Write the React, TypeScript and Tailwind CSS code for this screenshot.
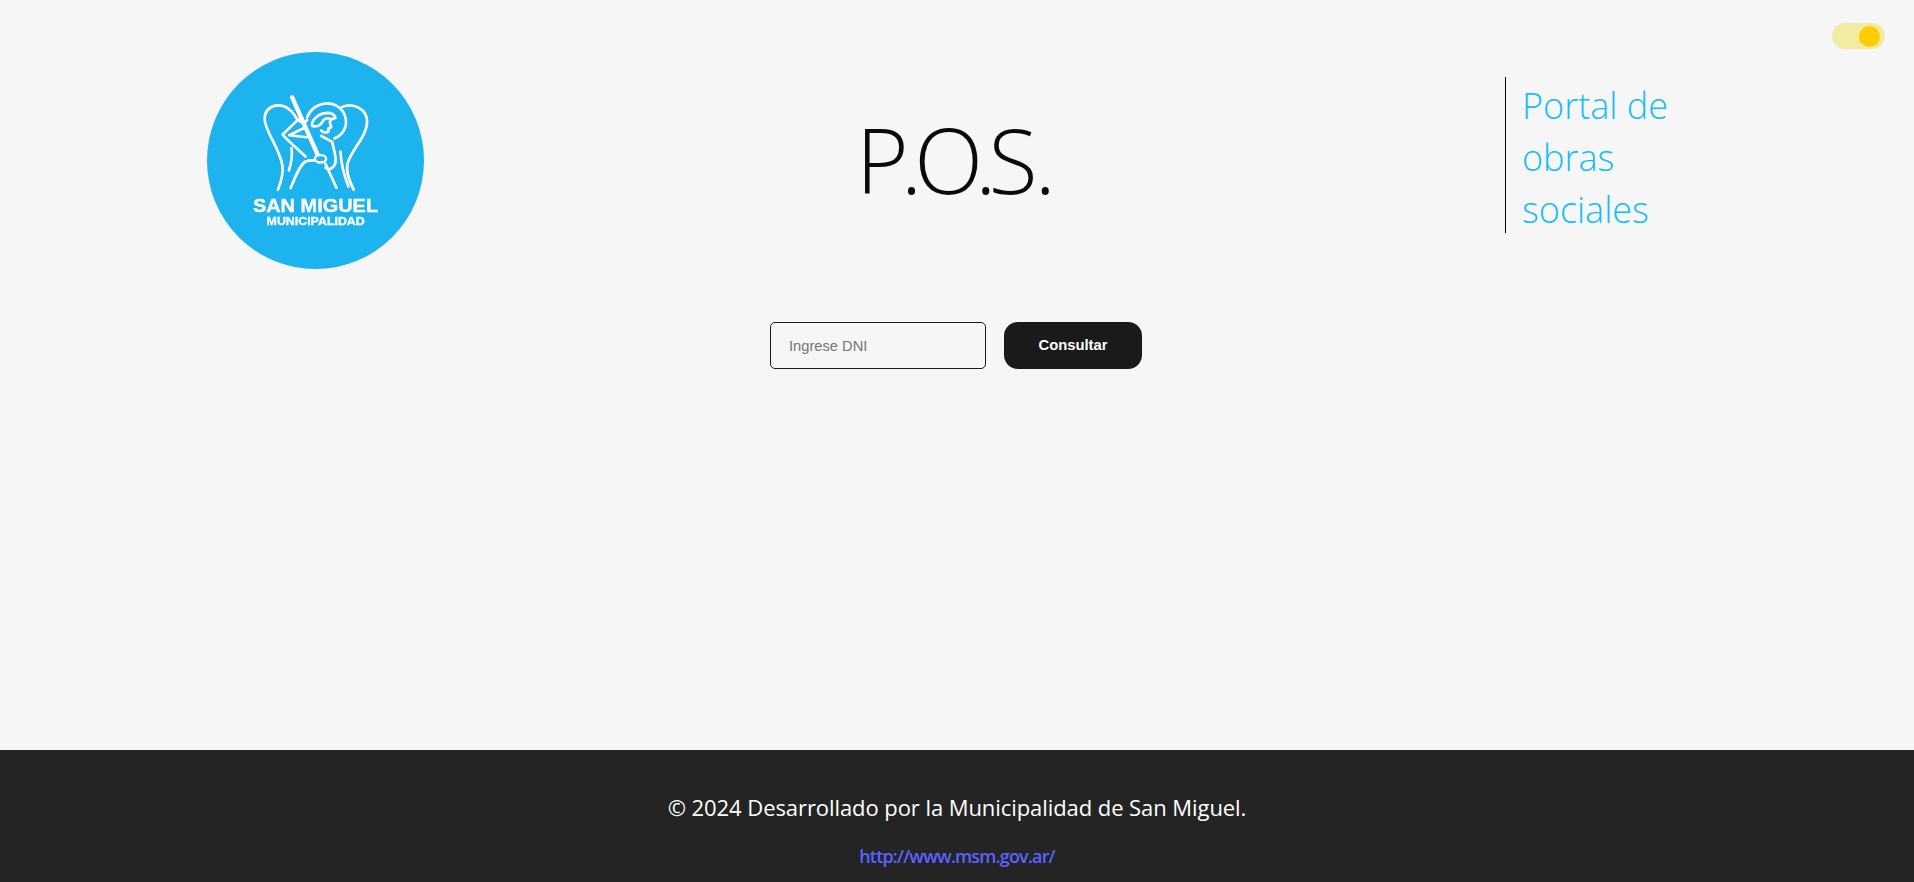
function Logo() {
  return (
    <svg viewBox="49 36 652 652" className="w-[217px] h-[217px] block blur-[0.4px]">
      <circle cx="375" cy="362" r="326" fill="#1cb3ee" />
      <g fill="none" stroke="#fff" strokeWidth="8" strokeLinecap="round" strokeLinejoin="round">
        {/* wings */}
        <path d="M318 235C308 218 296 205 280 199C250 190 222 205 222 238C225 278 265 320 275 375C280 400 270 430 262 450" />
        <path d="M303 325C306 350 302 372 295 392" />
        <path d="M300 445C315 410 328 375 345 365C355 361 365 361 373 362" />
        <path d="M455 201C490 187 530 208 530 245C530 290 482 330 471 372C465 400 480 430 490 450" />
        <path d="M450 335C452 375 462 410 474 440" />
        {/* halo + head */}
        <path d="M350 232C362 200 395 185 425 192C455 200 470 228 466 255C462 275 450 288 432 296" />
        <path d="M365 258C362 240 385 220 410 219C422 219 432 224 435 234C425 236 420 238 418 246L422 262L414 266L414 274C408 280 398 278 392 272" />
        <path d="M365 258C380 262 392 254 398 242C402 236 410 234 418 236" />
        {/* arms + body */}
        <path d="M322 240L276 284C290 302 320 325 345 350" />
        <path d="M345 262L296 286L348 292" />
        <path d="M392 288L425 306C432 335 440 360 434 372C426 390 415 390 405 384" />
        <path d="M405 372L438 444" />
        <path d="M322 238C330 250 345 250 350 240" />
      </g>
      <path d="M305 172L383 348" stroke="#fff" strokeWidth="13" strokeLinecap="round" />
      <ellipse cx="390" cy="357" rx="17" ry="11" fill="#1cb3ee" stroke="#fff" strokeWidth="7" />
      <text x="187" y="518" textLength="376" lengthAdjust="spacingAndGlyphs" fill="#fff" stroke="#fff" strokeWidth="1" fontSize="56" fontWeight="700" fontFamily="'Liberation Sans', Arial, sans-serif">SAN MIGUEL</text>
      <text x="228" y="557" textLength="295" lengthAdjust="spacingAndGlyphs" fill="#fff" stroke="#fff" strokeWidth="1" fontSize="35" fontWeight="700" fontFamily="'Liberation Sans', Arial, sans-serif">MUNICIPALIDAD</text>
    </svg>
  );
}

export default function App() {
  return (
    <div className="relative min-h-[882px] flex flex-col bg-[#f6f6f6] font-['Open_Sans',sans-serif]">
      <div className="absolute top-[23px] left-[1832px] w-[53px] h-[26px] rounded-full bg-[#f1eca0]">
        <div className="absolute top-[3px] right-[5px] w-[21px] h-[21px] rounded-full bg-[#ffcc00]" />
      </div>

      <main className="h-[750px] flex flex-col">
        <header className="flex items-start pt-[52px] pl-[207px]">
          <Logo />
          <div className="w-[1056px] flex justify-center pt-[45px]">
            <h1 className="text-[90px] leading-[125px] font-light tracking-[-8px] text-[#0a0a0a]">
              P.O.<span className="tracking-[-3px]">S</span>.
            </h1>
          </div>
          <div className="ml-[25px] mt-[25px] border-l border-black pl-[16px] w-[180px]">
            <p className="text-[36px] leading-[52px] pt-[3px] -mb-[3px] font-light text-[#12bdf9]">Portal de obras sociales</p>
          </div>
        </header>
        <form className="flex justify-center gap-[18px] mt-[53px] pr-[2px]">
          <input
            placeholder="Ingrese DNI"
            className="w-[216px] h-[47px] px-[18px] rounded-[5px] border border-[#1a1a1a] bg-[#f6f6f6] text-[14.7px] font-['Liberation_Sans',Arial,sans-serif] placeholder:text-[#757575]"
          />
          <button
            type="button"
            className="w-[138px] h-[47px] rounded-[14px] bg-[#1a1a1a] text-white text-[14.8px] font-bold font-['Liberation_Sans',Arial,sans-serif]"
          >
            Consultar
          </button>
        </form>
      </main>

      <footer className="h-[132px] bg-[#242424] flex flex-col items-center pt-[42px]">
        <p className="text-[22px] leading-[30px] tracking-[-0.07px] text-white">© 2024 Desarrollado por la Municipalidad de San Miguel.</p>
        <a href="#" className="mt-[22px] text-[18px] leading-[24px] tracking-[-0.82px] font-semibold text-[#5a62ff]">http://www.msm.gov.ar/</a>
      </footer>
    </div>
  );
}
